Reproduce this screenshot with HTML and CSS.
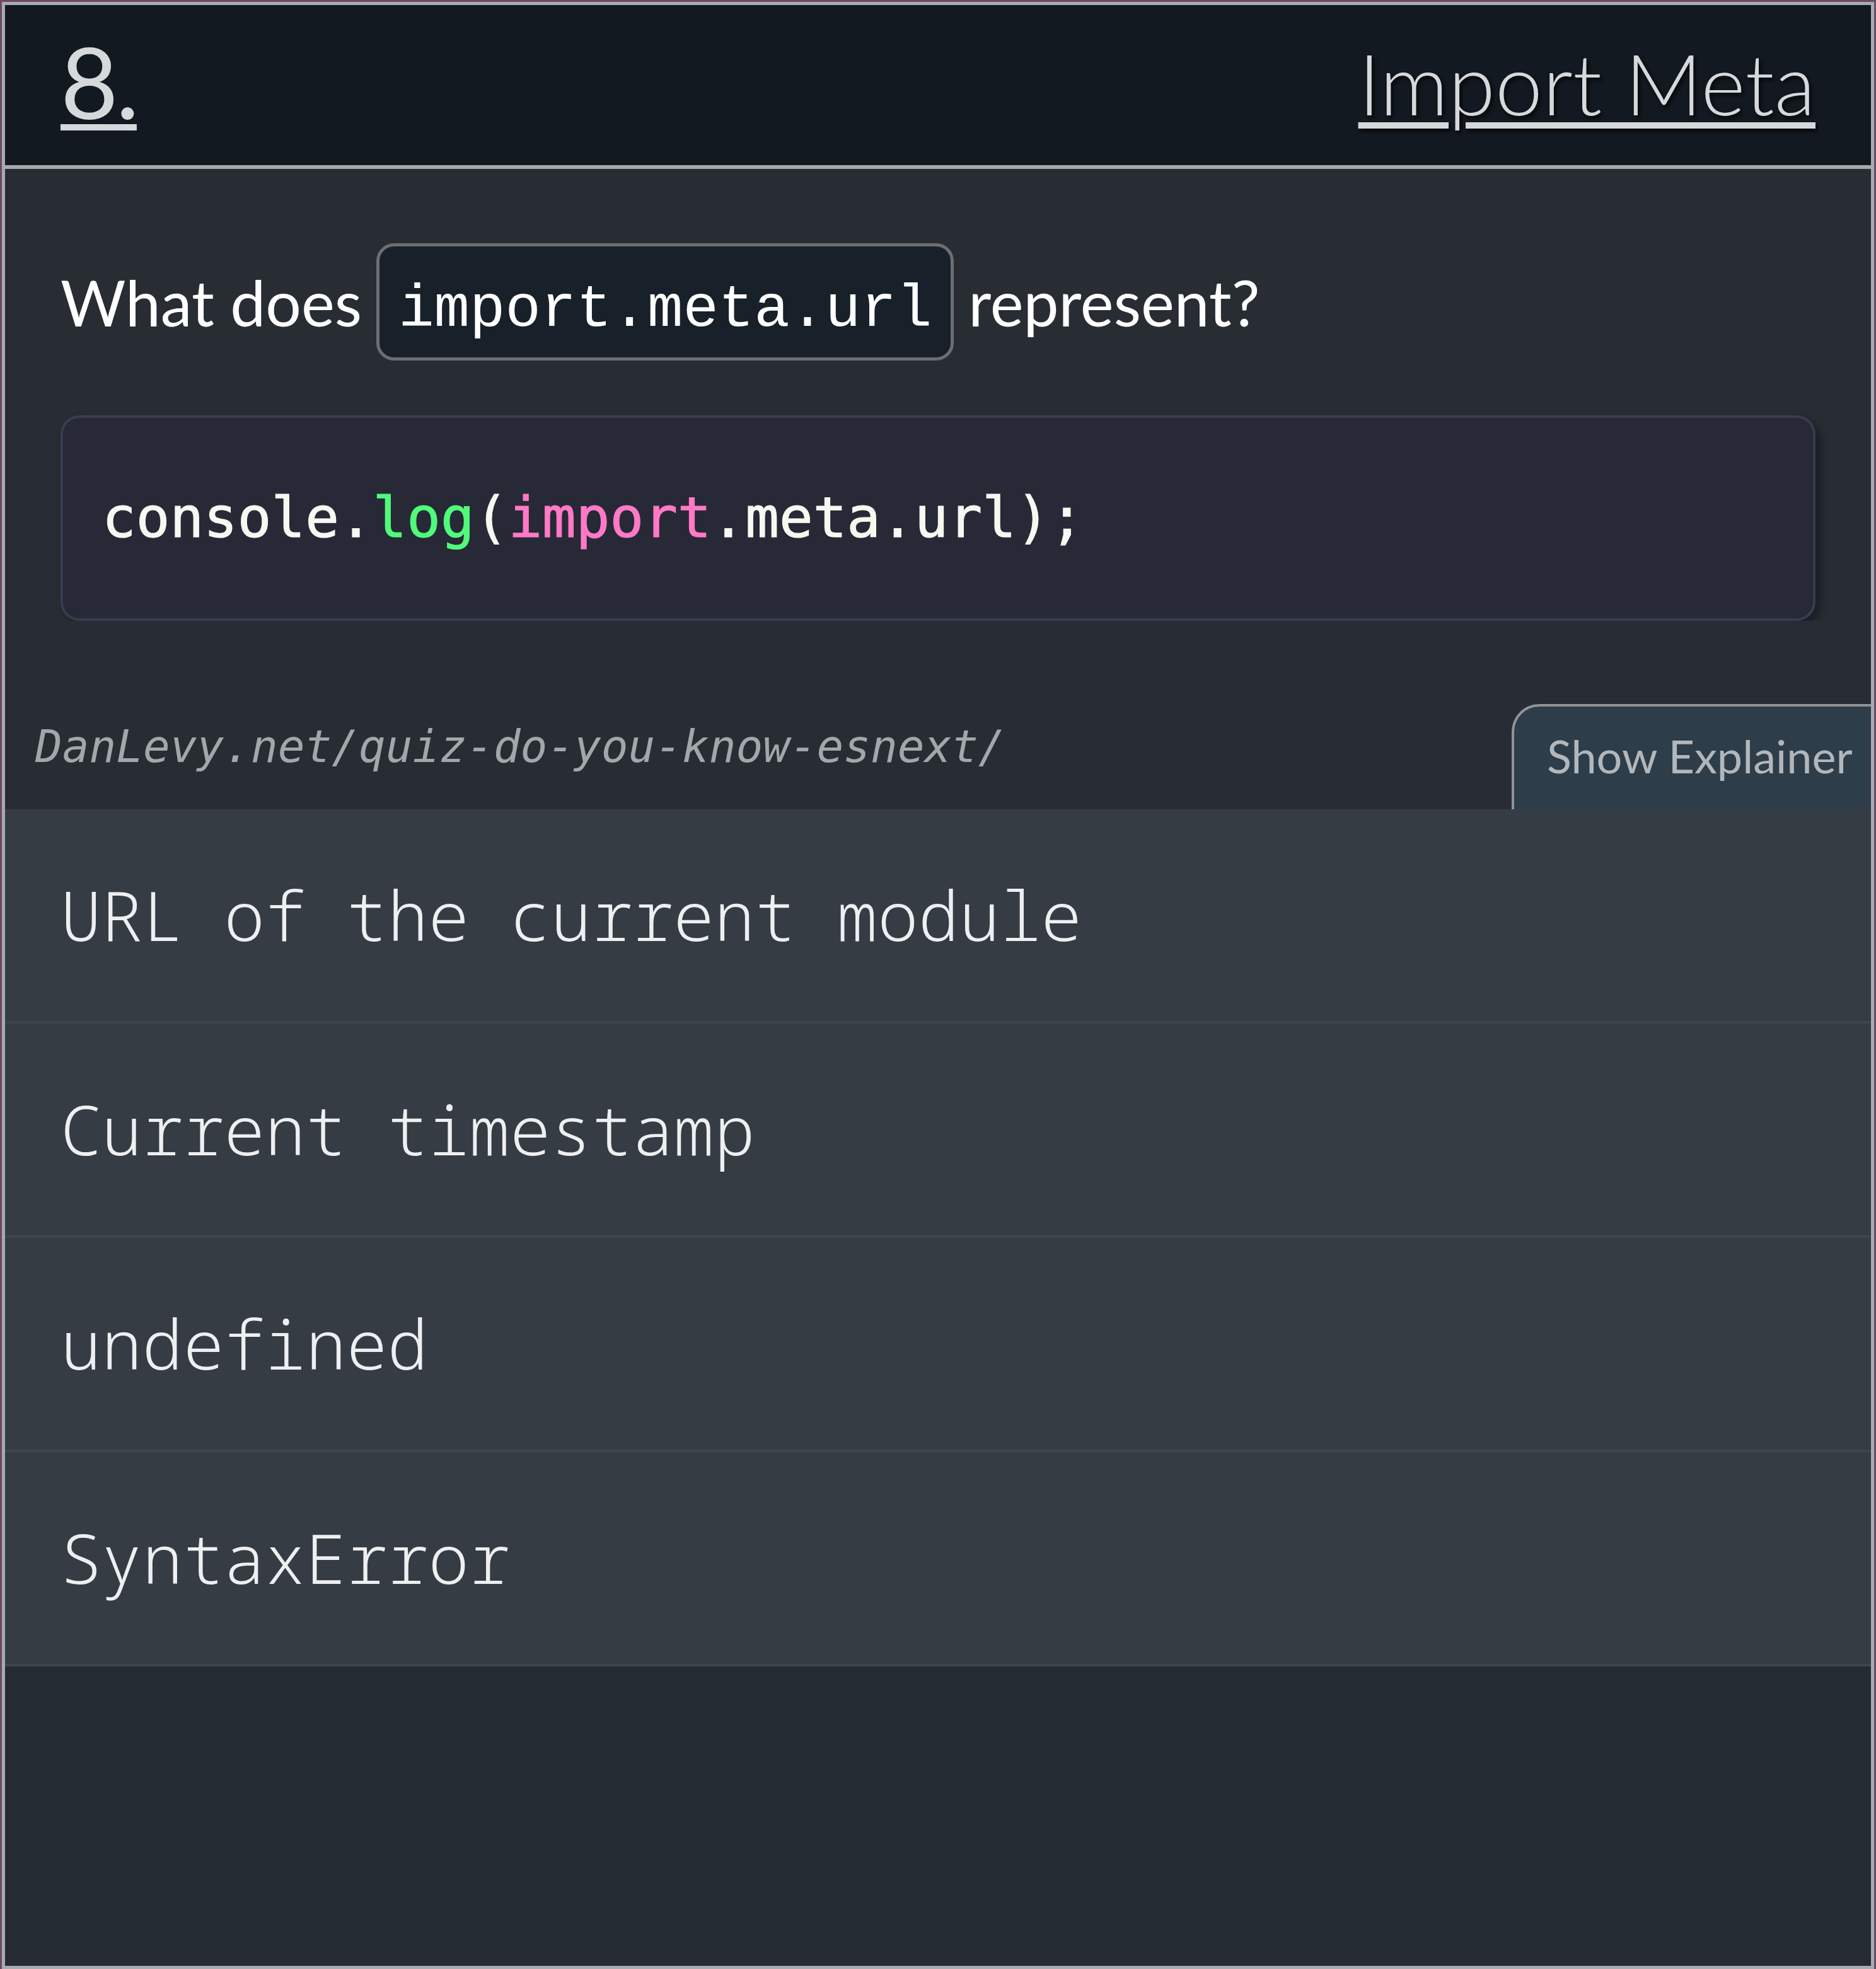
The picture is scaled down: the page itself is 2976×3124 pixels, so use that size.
FILE: index.html
```html
<!DOCTYPE html>
<html lang="en">
<head>
<meta charset="utf-8">
<title>Quiz: Import Meta</title>
<link rel="stylesheet" href="styles.css">
</head>
<body>
<div class="card">
  <header class="card-header">
    <a class="num" href="#q8">8.</a>
    <a class="title" href="#q8">Import Meta</a>
  </header>
  <section class="card-body">
    <div class="question">
      <span class="q-text">What does</span>
      <code class="inline-code">import.meta.url</code>
      <span class="q-text">represent?</span>
    </div>
    <pre class="code-block"><code><span class="tok-plain">console.</span><span class="tok-fn">log</span><span class="tok-plain">(</span><span class="tok-kw">import</span><span class="tok-plain">.meta.url);</span></code></pre>
  </section>
  <div class="meta">
    <span class="source-url">DanLevy.net/quiz-do-you-know-esnext/</span>
    <button class="explainer-tab" type="button">Show Explainer</button>
  </div>
  <ul class="answers">
    <li class="answer">URL of the current module</li>
    <li class="answer">Current timestamp</li>
    <li class="answer">undefined</li>
    <li class="answer">SyntaxError</li>
  </ul>
</div>
</body>
</html>
```
FILE: styles.css
```css
* { box-sizing: border-box; }

html, body {
  margin: 0;
  padding: 0;
}

body {
  background: #6d4769;
  width: 2976px;
  height: 3124px;
  overflow: hidden;
  font-family: "Lato", "Open Sans", sans-serif;
}

.card {
  margin: 3px 0 0 3px;
  width: 2970px;
  height: 3121px;
  border: 5px solid #a9aaac;
  background: #252b33;
  display: flex;
  flex-direction: column;
}

/* Header */
.card-header {
  height: 260px;
  flex: none;
  background: #131920;
  border-bottom: 6px solid #a7a9ab;
  padding: 0 88px;
  display: flex;
  justify-content: space-between;
  align-items: flex-start;
}

.num {
  margin-top: 41px;
  font-family: "Lato", sans-serif;
  font-weight: 400;
  font-size: 158px;
  line-height: 1;
  letter-spacing: -4px;
  color: #d6d9dc;
  text-decoration: underline;
  text-decoration-thickness: 10px;
  text-underline-offset: 8px;
}

.title {
  margin-top: 56px;
  font-family: "Lato", sans-serif;
  font-weight: 300;
  font-size: 135px;
  line-height: 1;
  color: #d6d9dc;
  text-decoration: underline;
  text-decoration-thickness: 10px;
  text-underline-offset: 11px;
  text-shadow: 3px 4px 6px rgba(0, 0, 0, 0.75);
}

/* Body */
.card-body {
  background: #282d34;
  padding: 118px 88px 0;
}

.question {
  display: flex;
  align-items: center;
  gap: 23px;
}

.q-text {
  font-family: "Lato", sans-serif;
  font-weight: 400;
  font-size: 100px;
  line-height: 1.2;
  color: #ffffff;
}

.inline-code {
  font-family: "Liberation Mono", monospace;
  font-size: 94px;
  line-height: 1.2;
  color: #ffffff;
  background: #18202a;
  border: 5px solid #6c6e71;
  border-radius: 28px;
  padding: 45px 30px 18px 30px;
}

.code-block {
  margin: 87px 0 0;
  height: 326px;
  display: flex;
  align-items: center;
  padding: 0 62px;
  background: #272936;
  border: 4px solid #393c51;
  border-radius: 30px;
  box-shadow: 8px 8px 14px rgba(0, 0, 0, 0.35);
  font-family: "DejaVu Sans Mono", monospace;
  font-size: 89.2px;
  line-height: 1.2;
  -webkit-text-stroke: 1.2px currentColor;
}

.tok-plain { color: #f8f8f2; }
.tok-fn { color: #50fa7b; }
.tok-kw { color: #ff79c6; }

/* Meta row */
.meta {
  background: #282d34;
  padding-top: 132px;
  display: flex;
  justify-content: space-between;
  align-items: flex-start;
}

.source-url {
  margin-top: 25px;
  padding-left: 48px;
  font-family: "DejaVu Sans Mono", monospace;
  font-style: italic;
  font-size: 71px;
  line-height: 1.2;
  color: #a3a6aa;
}

.explainer-tab {
  width: 570px;
  height: 167px;
  margin: 0;
  padding: 0 0 7px 52px;
  text-align: left;
  background: #2e3d4a;
  border: 0;
  border-top: 4px solid #8e9498;
  border-left: 4px solid #8e9498;
  border-top-left-radius: 44px;
  font-family: "Lato", sans-serif;
  font-weight: 400;
  font-size: 72px;
  line-height: 1;
  color: #b2b7bb;
  display: block;
}

/* Answers */
.answers {
  list-style: none;
  margin: 0;
  padding: 0;
}

.answer {
  height: 340px;
  background: #363c44;
  border-bottom: 4px solid #3f454d;
  padding-left: 88px;
  display: flex;
  align-items: center;
  font-family: "Noto Sans Mono", "DejaVu Sans Mono", monospace;
  font-weight: 300;
  font-size: 108px;
  line-height: 1.2;
  color: #eeeff0;
}
```
